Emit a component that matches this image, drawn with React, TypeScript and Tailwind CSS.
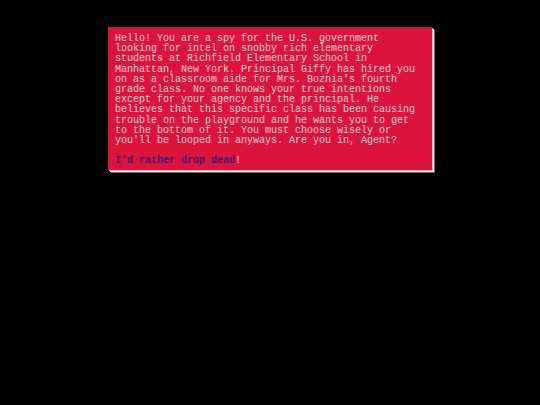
const lines = [
  'Hello! You are a spy for the U.S. government',
  'looking for intel on snobby rich elementary',
  'students at Richfield Elementary School in',
  'Manhattan, New York. Principal Giffy has hired you',
  "on as a classroom aide for Mrs. Boznia's fourth",
  'grade class. No one knows your true intentions',
  'except for your agency and the principal. He',
  'believes that this specific class has been causing',
  'trouble on the playground and he wants you to get',
  'to the bottom of it. You must choose wisely or',
  "you'll be looped in anyways. Are you in, Agent?",
];

export default function App() {
  return (
    <div className="flex min-h-[405px] w-full justify-center bg-black pt-[27px]">
      <div className="h-[143px] w-[324px] bg-[#dc143c] px-[7px] pt-[7px] shadow-[1px_1px_0_#f3a9b6,2px_2px_0_#f4f4f4,3px_3px_0_#6a6a6a] [font-family:'Courier_New','Liberation_Mono',monospace] text-[10px] leading-[10.2px] text-[#f9d0d7]">
        {lines.map((l) => (
          <div key={l} className="whitespace-pre">
            {l}
          </div>
        ))}
        <div className="h-[10.2px]" />
        <div className="whitespace-pre">
          <a href="#" className="font-bold text-[#3b1a7c]">
            I'd rather drop dead
          </a>
          !
        </div>
      </div>
    </div>
  );
}
